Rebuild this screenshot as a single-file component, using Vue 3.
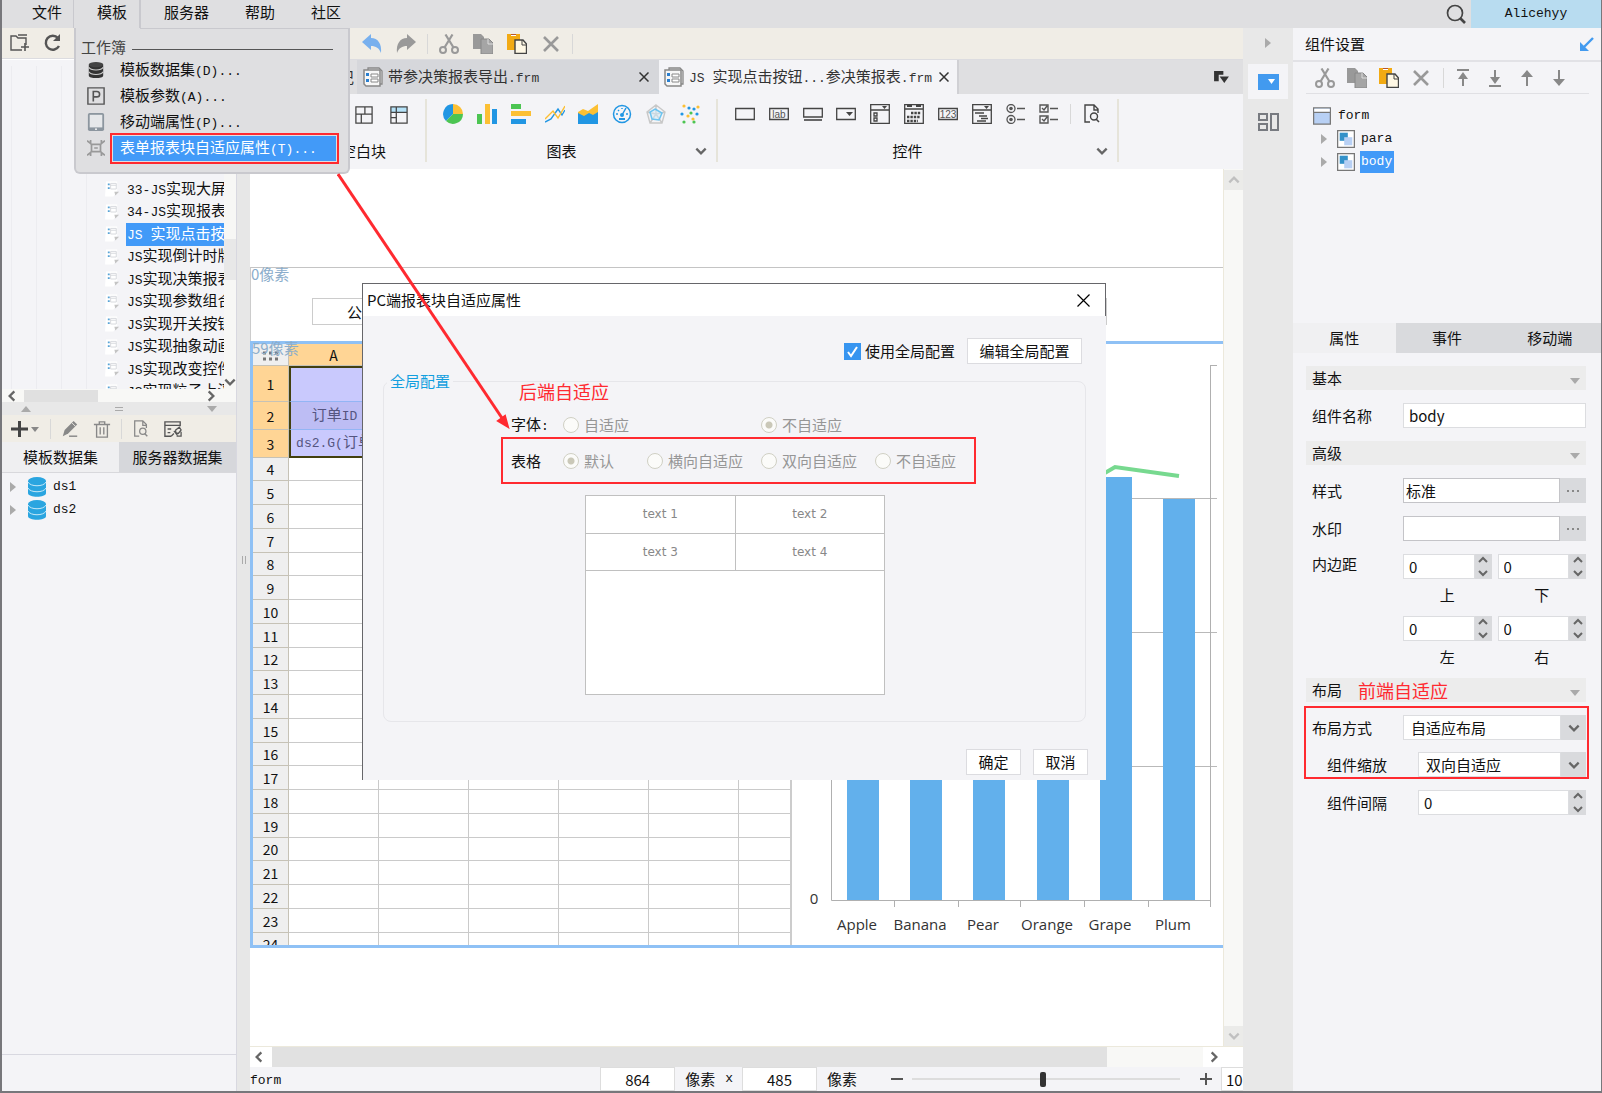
<script setup>
import { ref } from 'vue'

const menus = ['文件', '模板', '服务器', '帮助', '社区']
const menuItems = [
  { icon: 'i-db', text: '模板数据集', key: '(D)...' },
  { icon: 'i-param', text: '模板参数', key: '(A)...' },
  { icon: 'i-mobile', text: '移动端属性', key: '(P)...' },
  { icon: 'i-fit', text: '表单报表块自适应属性', key: '(T)...', active: true },
]
const files = [
  ['33-JS', '实现大屏'],
  ['34-JS', '实现报表'],
  ['JS ', '实现点击按钮'],
  ['JS', '实现倒计时牌'],
  ['JS', '实现决策报表'],
  ['JS', '实现参数组合'],
  ['JS', '实现开关按钮'],
  ['JS', '实现抽象动画'],
  ['JS', '实现改变控件'],
  ['JS', '实现粒子上浮'],
]
const chartIcons = ['i-pie', 'i-column', 'i-bar', 'i-line', 'i-area', 'i-gauge', 'i-radar', 'i-scatter']
const widgetIcons = ['i-text', 'i-label', 'i-button', 'i-combo', 'i-combocheck', 'i-date', 'i-number', 'i-tree', 'i-radios', 'i-checks']
const plainRows = Array.from({ length: 21 }, (_, i) => i + 4)
const bars = [
  { name: 'Apple', x: 55, top: 300 },
  { name: 'Banana', x: 118, top: 260 },
  { name: 'Pear', x: 181, top: 320 },
  { name: 'Orange', x: 245, top: 220 },
  { name: 'Grape', x: 308, top: 133 },
  { name: 'Plum', x: 371, top: 155 },
]
const useGlobal = ref(true)
const name = ref('body')
const style = ref('标准')
const watermark = ref('')
const gap = ref('0')
const margins = ref([
  [{ side: '上', value: '0' }, { side: '下', value: '0' }],
  [{ side: '左', value: '0' }, { side: '右', value: '0' }],
])
</script>

<template>
  <div class="app">
    <svg class="sprite" aria-hidden="true">
      <symbol id="i-folder" viewBox="0 0 20 20"><path d="M12 17H1V3h5l2 2h8v7" fill="none" stroke="#555" stroke-width="1.4" /><path d="M8 2h9M15 10v8M11 14h8" stroke="#555" stroke-width="1.6" /></symbol>
      <symbol id="i-refresh" viewBox="0 0 20 20"><path d="M16 13a7 7 0 1 1-1-8" fill="none" stroke="#555" stroke-width="2.4" /><path d="M17 1v7h-7z" fill="#555" /></symbol>
      <symbol id="i-undo" viewBox="0 0 20 20"><path d="M0 8 9 0v4c7 0 11 6 10 15-2-5-5-7-10-7v4z" fill="#78b0ee" /></symbol>
      <symbol id="i-redo" viewBox="0 0 20 20"><path d="M20 8 11 0v4C4 4 0 10 1 19c2-5 5-7 10-7v4z" fill="#999" /></symbol>
      <symbol id="i-cut" viewBox="0 0 20 20"><g fill="none" stroke="#999" stroke-width="2"><circle cx="4" cy="16" r="3" /><circle cx="16" cy="16" r="3" /><path d="m5.500 13.500 8-13M14.500 13.500l-8-13" stroke-width="2.200" /></g></symbol>
      <symbol id="i-copy" viewBox="0 0 20 20"><path d="M0 0h8l3 3v12H0z" fill="#999" /><path d="M8 5h8l4 4v11H8z" fill="#a5a5a5" stroke="#888" /><path d="M15 5v5h5" fill="none" stroke="#ddd" /></symbol>
      <symbol id="i-paste" viewBox="0 0 20 20"><path d="M0 0h13v16H0z" fill="#f2aa13" /><path d="M4 0h5v2H4z" fill="#fff" /><path d="M4 0h5v1H4z" fill="#b8552e" /><path d="M8 6h8l3.500 4v9.500H8z" fill="#fff8e5" stroke="#444" stroke-width="1.400" /><path d="M15 6v5h4" fill="none" stroke="#444" /></symbol>
      <symbol id="i-del" viewBox="0 0 20 20"><path d="m3 3 14 14M17 3 3 17" stroke="#999" stroke-width="2.600" /></symbol>
      <symbol id="i-close" viewBox="0 0 20 20"><path d="m1 1 18 18M19 1 1 19" stroke="currentColor" stroke-width="3" /></symbol>
      <symbol id="i-doc" viewBox="0 0 20 20"><path d="M5 3V1h11l3 3v13h-2" fill="#eee" stroke="#888" stroke-width="1.300" /><path d="M1 3h16v16H3l-2-2z" fill="#f7f7f7" stroke="#888" stroke-width="1.500" /><path d="M3 6h3v3H3zM3 12h3v3H3z" fill="#2a7fd0" /><path d="M8 7h7v3H8zM8 12h7v3H8z" fill="#fff" stroke="#888" /></symbol>
      <symbol id="i-file" viewBox="0 0 16 16"><path d="M1 0h12v10l-4 6H0z" fill="#fff" /><path d="M3 2h2v2H3zM3 6h2v2H3z" fill="#58a3d6" /><path d="M6 2h6v6H6zM6 4h6" fill="none" stroke="#d5d8dc" /><path d="M10 11h5l-4 4z" fill="#c4c4c4" /></symbol>
      <symbol id="i-db" viewBox="0 0 20 20"><path d="M2 4v12c0 4 16 4 16 0V4z" fill="#333" /><ellipse cx="10" cy="4" rx="8" ry="3" fill="#444" /><path d="M2 7c2 4 14 4 16 0M2 12c2 4 14 4 16 0" fill="none" stroke="#ccc" stroke-width="1.300" /></symbol>
      <symbol id="i-ds" viewBox="0 0 20 20"><path d="M1 4v12c0 5 18 5 18 0V4z" fill="#2aa5e0" /><ellipse cx="10" cy="4" rx="9" ry="4" fill="#2aa5e0" /><path d="M1 5c2 5 16 5 18 0M1 11c2 5 16 5 18 0" fill="none" stroke="#c7e9f8" /></symbol>
      <symbol id="i-param" viewBox="0 0 20 20"><path d="M1 1h18v18H1z" fill="none" stroke="#555" stroke-width="1.600" /><path d="M7 16V5h4a3 3 0 0 1 0 6H7" fill="none" stroke="#555" stroke-width="1.800" /></symbol>
      <symbol id="i-mobile" viewBox="0 0 20 20"><rect x="1" y="0" width="18" height="20" rx="2" fill="#8c969f" /><path d="M3 2h14v14H3z" fill="#e6e8ea" /><circle cx="10" cy="18" r="1" fill="#fff" /></symbol>
      <symbol id="i-fit" viewBox="0 0 20 20"><g fill="none" stroke="#999" stroke-width="1.900"><path d="M5 6h10v8H5zM8 10h4" /><path d="m0 2 4 3V1M20 2l-4 3V1M0 18l4-3v4M20 18l-4-3v4" /></g></symbol>
      <symbol id="i-block" viewBox="0 0 20 20"><path d="M1 1h18v18H1zM1 9h18M11 1v8M7 9v10" fill="none" stroke="#444" stroke-width="1.400" /></symbol>
      <symbol id="i-report" viewBox="0 0 20 20"><path d="M1 1h18v6H1z" fill="#b5e2f8" /><path d="M1 1h18v18H1zM1 7h18M7 1v18M1 13h6" fill="none" stroke="#444" stroke-width="1.400" /></symbol>
      <symbol id="i-pie" viewBox="0 0 20 20"><path d="M10 10V0A10 10 0 0 0 3 17z" fill="#2196e3" /><path d="M10 10V0a10 10 0 0 1 10 10z" fill="#fcc034" /><path d="M10 10h10A10 10 0 0 1 3 17z" fill="#4cc552" /></symbol>
      <symbol id="i-column" viewBox="0 0 20 20"><path d="M0 10h5v10H0z" fill="#4cc552" /><path d="M8 0h5v20H8z" fill="#fcc034" /><path d="M15 5h5v15h-5z" fill="#2196e3" /></symbol>
      <symbol id="i-bar" viewBox="0 0 20 20"><path d="M0 0h10v5H0z" fill="#4cc552" /><path d="M0 7h20v5H0z" fill="#fcc034" /><path d="M0 15h15v5H0z" fill="#2196e3" /></symbol>
      <symbol id="i-line" viewBox="0 0 20 20"><path d="m0 18 6-3 7-10 4 6 3-5" fill="none" stroke="#2196e3" stroke-width="1.400" /><path d="m0 15 8-8 5 7 7-12" fill="none" stroke="#fcc034" stroke-width="1.400" /></symbol>
      <symbol id="i-area" viewBox="0 0 20 20"><path d="m0 8 5-3 5 2 10-7v12H0z" fill="#fcc034" /><path d="m0 9 6 3 5-3 4 2 5-3v12H0z" fill="#2196e3" /></symbol>
      <symbol id="i-gauge" viewBox="0 0 20 20"><circle cx="10" cy="10" r="8.500" fill="none" stroke="#2196e3" stroke-width="1.500" /><path d="m10 11 4-7M4 10h2M14 10h2M10 4v1M6 6l1 1" stroke="#2196e3" stroke-width="1.500" /><circle cx="10" cy="11" r="2" fill="#2196e3" /><path d="M7 15h6" stroke="#2196e3" stroke-width="2" /></symbol>
      <symbol id="i-radar" viewBox="0 0 20 20"><path d="m10 1 9 7-3 11H4L1 8zM10 10V1M10 10l9-2M10 10l6 9M10 10l-6 9M10 10 1 8" fill="none" stroke="#c8c8c8" stroke-width="1.400" /><path d="m9 5 7 4-3 7-7-1-2-7z" fill="#cdeaf8" fill-opacity=".5" stroke="#6cc4f0" stroke-width="1.500" /></symbol>
      <symbol id="i-scatter" viewBox="0 0 20 20"><g fill="#fcc034"><circle cx="4" cy="2" r="1.600" /><circle cx="18" cy="3" r="1.600" /><circle cx="8" cy="12" r="1.600" /><circle cx="13" cy="15" r="1.600" /></g><g fill="#2196e3"><circle cx="9" cy="4" r="1.600" /><circle cx="14" cy="5" r="1.600" /><circle cx="2" cy="10" r="1.600" /><circle cx="17" cy="10" r="1.600" /></g><g fill="#4cc552"><circle cx="11" cy="9" r="1.600" /><circle cx="4" cy="18" r="1.600" /><circle cx="14" cy="18" r="1.600" /></g></symbol>
      <symbol id="i-text" viewBox="0 0 20 20"><path d="M.7 4.500h18.600v11H.7z" fill="none" stroke="#444" stroke-width="1.300" /></symbol>
      <symbol id="i-label" viewBox="0 0 20 20"><path d="M.7 4.500h18.600v11H.7z" fill="none" stroke="#444" stroke-width="1.300" /><text x="10" y="14" text-anchor="middle" font-size="10" font-family="Liberation Sans, sans-serif" fill="#555">lab</text></symbol>
      <symbol id="i-button" viewBox="0 0 20 20"><path d="M.7 4.500h18.600v8.500H.7z" fill="none" stroke="#444" stroke-width="1.300" /><path d="M1 16h18" stroke="#444" stroke-width="1.600" /></symbol>
      <symbol id="i-combo" viewBox="0 0 20 20"><path d="M.7 4.500h18.600v11H.7z" fill="none" stroke="#444" stroke-width="1.300" /><path d="M10 8h7l-3.500 4z" fill="#444" /></symbol>
      <symbol id="i-combocheck" viewBox="0 0 20 20"><path d="M.7.7h18.600v18.600H.7zM1 6h18M4 9h3v3H4zM4 14h3v3H4z" fill="none" stroke="#444" stroke-width="1.300" /><path d="M12 2h5l-2.500 3z" fill="#444" /></symbol>
      <symbol id="i-date" viewBox="0 0 20 20"><path d="M.7.7h18.600v18.600H.7zM1 5h18" fill="none" stroke="#444" stroke-width="1.300" /><path d="M3 2h5M12 2h5" stroke="#444" stroke-width="2" /><path d="M7 9h10M3 13h13M3 17h11" stroke="#444" stroke-width="2.400" stroke-dasharray="2.400 1" /></symbol>
      <symbol id="i-number" viewBox="0 0 20 20"><path d="M.7 4.500h18.600v11H.7z" fill="none" stroke="#444" stroke-width="1.300" /><text x="10" y="14" text-anchor="middle" font-size="10" font-family="Liberation Sans, sans-serif" fill="#555">123</text></symbol>
      <symbol id="i-tree" viewBox="0 0 20 20"><path d="M.7.7h18.600v18.600H.7zM1 6h18M3 9h9M7 12h8M9 14.500h7M5 17h9" fill="none" stroke="#444" stroke-width="1.300" /><path d="M12 2h5l-2.500 3z" fill="#444" /></symbol>
      <symbol id="i-radios" viewBox="0 0 20 20"><g fill="none" stroke="#555" stroke-width="1.300"><circle cx="5" cy="4.500" r="4" /><circle cx="5" cy="15.500" r="4" /><path d="M11 4.500h8M11 15.500h8" stroke-width="1.600" /></g><circle cx="5" cy="4.500" r="1.800" fill="#555" /><circle cx="5" cy="15.500" r="1.800" fill="#555" /></symbol>
      <symbol id="i-checks" viewBox="0 0 20 20"><path d="M1 1h8v7H1zM1 12h8v7H1zM11 4.500h8M11 15.500h8M3 4l2 2 3-4M3 15l2 2 3-4" fill="none" stroke="#555" stroke-width="1.400" /></symbol>
      <symbol id="i-preview" viewBox="0 0 20 20"><path d="M8 18H3V1h9l4 4v4M12 1v5h4" fill="none" stroke="currentColor" stroke-width="1.400" /><circle cx="12" cy="12.500" r="3.500" fill="none" stroke="currentColor" stroke-width="1.400" /><path d="m14 15 3 3" stroke="currentColor" stroke-width="1.600" /></symbol>
      <symbol id="i-pencil" viewBox="0 0 20 20"><path d="m2 18 2-7L14 1l4 4L8 15z" fill="#888" /><path d="m12 3 4 4" stroke="#f0ede6" /><path d="M9 18h9" stroke="#888" stroke-width="1.600" /></symbol>
      <symbol id="i-trash" viewBox="0 0 20 20"><path d="M1 5h18M7 5V2h6v3M4 5v14h12V5M8 8v8M12 8v8" fill="none" stroke="#888" stroke-width="1.500" /></symbol>
      <symbol id="i-dsedit" viewBox="0 0 20 20"><path d="M8 18H1V2h17v5M1 6h17M4 10h4M4 14h3" fill="none" stroke="#555" stroke-width="1.500" /><path d="m8 18 3-3m0-3 4 5m-2-6 4-3 2 3-3 4-3-1zM14 18h5v-5" fill="none" stroke="#555" stroke-width="1.400" /></symbol>
      <symbol id="i-search" viewBox="0 0 20 20"><circle cx="9" cy="9" r="7.500" fill="none" stroke="#444" stroke-width="1.700" /><path d="m14 14 5 5" stroke="#444" stroke-width="2.600" /></symbol>
      <symbol id="i-top" viewBox="0 0 20 20"><path d="M4 2h12M10 18V8" stroke="#888" stroke-width="2" /><path d="M5 11h10l-5-7z" fill="#888" /></symbol>
      <symbol id="i-bottom" viewBox="0 0 20 20"><path d="M4 18h12M10 2v10" stroke="#888" stroke-width="2" /><path d="M5 9h10l-5 7z" fill="#888" /></symbol>
      <symbol id="i-up" viewBox="0 0 20 20"><path d="M10 18V6" stroke="#888" stroke-width="2" /><path d="M4 9h12l-6-7z" fill="#888" /></symbol>
      <symbol id="i-down" viewBox="0 0 20 20"><path d="M10 2v12" stroke="#888" stroke-width="2" /><path d="M4 11h12l-6 7z" fill="#888" /></symbol>
      <symbol id="i-form" viewBox="0 0 20 20"><path d="M.7 1h18.600v18H.7z" fill="#b8d0f4" stroke="#777" stroke-width="1.400" /><path d="M1.400 2h17.200v3.500H1.400z" fill="#fff" /><path d="M1 6h18" stroke="#777" stroke-width="1.400" /></symbol>
      <symbol id="i-part" viewBox="0 0 20 20"><path d="M.7.7h18.600v18.600H.7z" fill="#fff" stroke="#777" stroke-width="1.400" /><path d="M3 3h9v9H3z" fill="#3391c9" /><path d="M8 8h9v9H8z" fill="#b8d0f4" /></symbol>
      <symbol id="i-chev" viewBox="0 0 12 12"><path d="m2 4 4 4 4-4" fill="none" stroke="currentColor" stroke-width="2" /></symbol>
      <symbol id="i-tri" viewBox="0 0 10 10"><path d="M0 2h10L5 8z" fill="currentColor" /></symbol>
    </svg>

    <header class="menubar">
      <nav class="menus">
        <button v-for="m in menus" :key="m" class="menu" :class="{ open: m === '模板' }">{{ m }}</button>
      </nav>
      <button class="plain" aria-label="搜索"><svg class="ic"><use href="#i-search" /></svg></button>
      <button class="user mono">Alicehyy</button>
    </header>

    <div class="main">
      <aside class="left">
        <div class="bar">
          <button class="plain" aria-label="新建文件夹"><svg class="ic"><use href="#i-folder" /></svg></button>
          <button class="plain" aria-label="刷新"><svg class="ic"><use href="#i-refresh" /></svg></button>
        </div>
        <div class="tree">
          <ul class="files">
            <li v-for="(f, i) in files" :key="i">
              <svg class="fic"><use href="#i-file" /></svg>
              <span class="fname" :class="{ sel: i === 2 }"><span class="mono pre">{{ f[0] }}</span>{{ f[1] }}</span>
            </li>
          </ul>
          <div class="tree-v"><i></i><svg class="ch"><use href="#i-chev" /></svg></div>
          <div class="tree-h"><svg class="ch l"><use href="#i-chev" /></svg><i></i><b></b><svg class="ch r"><use href="#i-chev" /></svg></div>
        </div>
        <div class="split-h"><svg class="tri flip"><use href="#i-tri" /></svg><span class="grip"></span><svg class="tri"><use href="#i-tri" /></svg></div>
        <div class="ds-bar">
          <button class="plain add" aria-label="添加"><svg width="28" height="18" viewBox="0 0 28 18"><path d="M8.500 1v16M0 9h17" stroke="#444" stroke-width="3" /><path d="M20 7h8l-4 5z" fill="#888" /></svg></button>
          <span class="vs"></span>
          <button class="plain" aria-label="编辑"><svg class="ic s"><use href="#i-pencil" /></svg></button>
          <button class="plain" aria-label="删除"><svg class="ic s"><use href="#i-trash" /></svg></button>
          <span class="vs"></span>
          <button class="plain grey" aria-label="预览"><svg class="ic s"><use href="#i-preview" /></svg></button>
          <button class="plain" aria-label="连接"><svg class="ic s"><use href="#i-dsedit" /></svg></button>
        </div>
        <div class="ds-tabs"><button class="on">模板数据集</button><button>服务器数据集</button></div>
        <ul class="ds-list">
          <li v-for="d in ['ds1', 'ds2']" :key="d"><svg class="tri side"><use href="#i-tri" /></svg><svg class="ic"><use href="#i-ds" /></svg><span class="mono">{{ d }}</span></li>
        </ul>
        <div class="left-foot"></div>
      </aside>
      <div class="split-v"><span></span></div>

      <section class="center">
        <div class="toolbar">
          <button class="plain" aria-label="撤销"><svg class="ic"><use href="#i-undo" /></svg></button>
          <button class="plain" aria-label="重做"><svg class="ic"><use href="#i-redo" /></svg></button>
          <span class="vs"></span>
          <button class="plain" aria-label="剪切"><svg class="ic"><use href="#i-cut" /></svg></button>
          <button class="plain" aria-label="复制"><svg class="ic"><use href="#i-copy" /></svg></button>
          <button class="plain" aria-label="粘贴"><svg class="ic"><use href="#i-paste" /></svg></button>
          <button class="plain" aria-label="删除"><svg class="ic"><use href="#i-del" /></svg></button>
          <span class="vs"></span>
        </div>
        <div class="tabs">
          <div class="tab first">记</div>
          <div class="tab"><svg class="ic"><use href="#i-doc" /></svg><span class="tt">带参决策报表导出<span class="mono">.frm</span></span><svg class="x"><use href="#i-close" /></svg></div>
          <div class="tab on"><svg class="ic"><use href="#i-doc" /></svg><span class="tt"><span class="mono pre">JS </span>实现点击按钮<span class="mono">...</span>参决策报表<span class="mono">.frm</span></span><svg class="x"><use href="#i-close" /></svg></div>
          <button class="plain more" aria-label="标签列表"><svg width="15" height="13" viewBox="0 0 16 14"><path d="M0 0h10v4H5v7H0z" fill="#333" /><path d="M6 6h10l-5 7z" fill="#333" /></svg></button>
        </div>
        <div class="ribbon">
          <div class="group blank">
            <div class="icons"><svg class="ic s"><use href="#i-block" /></svg><svg class="ic s"><use href="#i-report" /></svg></div>
            <div class="glabel">空白块</div>
          </div>
          <div class="group charts">
            <div class="icons"><svg v-for="c in chartIcons" :key="c" class="ic"><use :href="'#' + c" /></svg></div>
            <div class="glabel">图表</div><svg class="ch gmore"><use href="#i-chev" /></svg>
          </div>
          <div class="group widgets">
            <div class="icons"><svg v-for="c in widgetIcons" :key="c" class="ic"><use :href="'#' + c" /></svg><span class="vs"></span><svg class="ic dark"><use href="#i-preview" /></svg></div>
            <div class="glabel">控件</div><svg class="ch gmore"><use href="#i-chev" /></svg>
          </div>
        </div>

        <div class="work">
          <div class="canvas">
            <div class="para"><span class="px">0像素</span><div class="company">公</div></div>
            <div class="body">
              <span class="px over">59像素</span>
              <div class="sheet-wrap">
                <table class="sheet">
                  <colgroup><col class="num"><col v-for="n in 6" :key="n"></colgroup>
                  <thead><tr><th><svg width="18" height="10" viewBox="0 0 18 10"><path d="M1 2h16M1 8h16" stroke="#777" stroke-width="3" stroke-dasharray="3 3" /></svg></th><th v-for="c in 'ABCDEF'" :key="c" class="hot">{{ c }}</th></tr></thead>
                  <tbody>
                    <tr class="r1"><th class="hot">1</th><td class="s1"></td><td v-for="n in 5" :key="n"></td></tr>
                    <tr class="r2"><th class="hot">2</th><td class="s2">订单<span class="mono">ID</span></td><td v-for="n in 5" :key="n"></td></tr>
                    <tr class="r2"><th class="hot">3</th><td class="s3"><div><span class="mono">ds2.G(</span>订单<br><span class="mono">ID)</span></div></td><td v-for="n in 5" :key="n"></td></tr>
                    <tr v-for="r in plainRows" :key="r" class="rn"><th>{{ r }}</th><td v-for="n in 6" :key="n"></td></tr>
                  </tbody>
                </table>
              </div>
              <svg class="chart" width="431" height="601" viewBox="0 0 431 601">
                <g stroke="#b9b9b9" stroke-width="1" fill="none"><path d="M40 154.500h385M40 288.500h385M40 422.500h385" /></g>
                <rect v-for="b in bars" :key="b.name" :x="b.x" :y="b.top" width="32" :height="556 - b.top" fill="#62b0ec" />
                <path d="M39.500 21v535.500h379V21M418 21.500h7M102.500 556v7M166.500 556v7M228.500 556v7M292.500 556v7M356.500 556v7M418.500 556v7" fill="none" stroke="#b0b0b0" />
                <path d="m260 160 63-37 64 9" fill="none" stroke="#77d98f" stroke-width="4" />
                <g font-size="15" fill="#333" text-anchor="middle"><text x="22" y="560">0</text><text v-for="b in bars" :key="b.name" :x="b.x + 10" y="586">{{ b.name }}</text></g>
              </svg>
            </div>
          </div>
          <div class="vbar"><span><svg class="ch flip"><use href="#i-chev" /></svg></span><span><svg class="ch"><use href="#i-chev" /></svg></span></div>
          <div class="hbar"><span><svg class="ch l"><use href="#i-chev" /></svg></span><i></i><b></b><span><svg class="ch r"><use href="#i-chev" /></svg></span></div>
        </div>
        <footer class="status">
          <span class="mono fname-status">form</span>
          <input class="w1" aria-label="宽度" value="864"><span class="unit">像素</span><span class="mono by">x</span>
          <input class="w1" aria-label="高度" value="485"><span class="unit">像素</span>
          <button class="plain zoom" aria-label="缩小"><svg width="14" height="14" viewBox="0 0 14 14"><path d="M1 7h12" stroke="#555" stroke-width="2" /></svg></button>
          <input class="slider" type="range" aria-label="缩放" min="0" max="100" value="49">
          <button class="plain zoom" aria-label="放大"><svg width="14" height="14" viewBox="0 0 14 14"><path d="M1 7h12M7 1v12" stroke="#555" stroke-width="2" /></svg></button>
          <input class="pct" aria-label="比例" value="100">
        </footer>
      </section>

      <div class="rail">
        <svg class="tri side"><use href="#i-tri" /></svg>
        <button class="plain on" aria-label="组件设置"><svg width="21" height="16" viewBox="0 0 21 16"><path d="M0 0h21v16H0z" fill="#429aef" /><path d="M10 5h7l-3.500 5z" fill="#fff" /></svg></button>
        <button class="plain" aria-label="组件库"><svg width="21" height="18" viewBox="0 0 21 18"><path d="M1 1h8v6H1zM1 11h8v6H1zM13 1h7v16h-7z" fill="none" stroke="#777a80" stroke-width="2" /></svg></button>
      </div>

      <aside class="props">
        <div class="ptitle">组件设置<svg width="14" height="14" viewBox="0 0 14 14"><path d="m13 1-9 9" stroke="#429aef" stroke-width="2.400" /><path d="M0 5v9h9z" fill="#429aef" /></svg></div>
        <div class="ptools">
          <svg class="ic"><use href="#i-cut" /></svg><svg class="ic"><use href="#i-copy" /></svg><svg class="ic"><use href="#i-paste" /></svg><svg class="ic"><use href="#i-del" /></svg>
          <span class="vs"></span>
          <svg class="ic"><use href="#i-top" /></svg><svg class="ic"><use href="#i-bottom" /></svg><svg class="ic"><use href="#i-up" /></svg><svg class="ic"><use href="#i-down" /></svg>
        </div>
        <ul class="ptree">
          <li class="root"><svg class="ic s"><use href="#i-form" /></svg><span class="mono">form</span></li>
          <li><svg class="tri side"><use href="#i-tri" /></svg><svg class="ic s"><use href="#i-part" /></svg><span class="mono">para</span></li>
          <li><svg class="tri side"><use href="#i-tri" /></svg><svg class="ic s"><use href="#i-part" /></svg><span class="mono sel">body</span></li>
        </ul>
        <div class="ptabs"><button class="on">属性</button><button>事件</button><button>移动端</button></div>
        <div class="form">
          <div class="sec">基本<svg class="tri"><use href="#i-tri" /></svg></div>
          <div class="row"><label for="p-name">组件名称</label><input id="p-name" v-model="name" class="grow"></div>
          <div class="sec">高级<svg class="tri"><use href="#i-tri" /></svg></div>
          <div class="row"><label for="p-style">样式</label><input id="p-style" v-model="style" class="grow dk"><button class="dots" aria-label="选择样式"><i></i><i></i><i></i></button></div>
          <div class="row"><label for="p-wm">水印</label><input id="p-wm" v-model="watermark" class="grow dk"><button class="dots" aria-label="选择水印"><i></i><i></i><i></i></button></div>
          <div v-for="(pair, i) in margins" :key="i" class="row pad">
            <span class="lab">{{ i === 0 ? '内边距' : '' }}</span>
            <div class="pair">
              <div v-for="m in pair" :key="m.side" class="side-field">
                <div class="spin"><input :id="'m-' + m.side" v-model="m.value"><span class="sb"><button aria-label="增加"><svg class="ch flip"><use href="#i-chev" /></svg></button><button aria-label="减少"><svg class="ch"><use href="#i-chev" /></svg></button></span></div>
                <label :for="'m-' + m.side">{{ m.side }}</label>
              </div>
            </div>
          </div>
          <div class="sec">布局<span class="note">前端自适应</span><svg class="tri"><use href="#i-tri" /></svg></div>
          <div class="layout-rows">
            <div class="row"><label for="p-layout">布局方式</label><div class="select grow"><select id="p-layout"><option>自适应布局</option></select><svg class="ch"><use href="#i-chev" /></svg></div></div>
            <div class="row sub"><label for="p-scale">组件缩放</label><div class="select grow"><select id="p-scale"><option>双向自适应</option></select><svg class="ch"><use href="#i-chev" /></svg></div></div>
            <div class="redbox"></div>
          </div>
          <div class="row sub"><label for="p-gap">组件间隔</label><div class="spin grow"><input id="p-gap" v-model="gap"><span class="sb"><button aria-label="增加"><svg class="ch flip"><use href="#i-chev" /></svg></button><button aria-label="减少"><svg class="ch"><use href="#i-chev" /></svg></button></span></div></div>
        </div>
      </aside>
    </div>

    <div class="popup">
      <div class="ph">工作簿<span></span></div>
      <button v-for="m in menuItems" :key="m.key" class="pi" :class="{ active: m.active }">
        <svg class="ic s"><use :href="'#' + m.icon" /></svg><span class="pt">{{ m.text }}<span class="mono">{{ m.key }}</span></span>
      </button>
    </div>

    <div class="dialog" role="dialog" aria-label="PC端报表块自适应属性">
      <div class="dtitle">PC端报表块自适应属性<button class="plain" aria-label="关闭"><svg width="13" height="13" viewBox="0 0 13 13"><path d="m.5.5 12 12M12.500.5l-12 12" stroke="#000" stroke-width="1.200" /></svg></button></div>
      <div class="dbody">
        <div class="dtop">
          <label class="chk"><input v-model="useGlobal" type="checkbox">使用全局配置</label>
          <button class="btn wide">编辑全局配置</button>
        </div>
        <fieldset>
          <legend>全局配置</legend>
          <div class="note hint">后端自适应</div>
          <div class="opts">
            <span class="ol">字体<span class="mono">:</span></span>
            <label><input type="radio" name="font" disabled>自适应</label>
            <label class="c3"><input type="radio" name="font" checked disabled>不自适应</label>
          </div>
          <div class="opts boxed">
            <span class="ol">表格</span>
            <label><input type="radio" name="grid" checked disabled>默认</label>
            <label><input type="radio" name="grid" disabled>横向自适应</label>
            <label class="c3"><input type="radio" name="grid" disabled>双向自适应</label>
            <label><input type="radio" name="grid" disabled>不自适应</label>
          </div>
          <div class="sample"><table><tbody><tr><td>text 1</td><td>text 2</td></tr><tr><td>text 3</td><td>text 4</td></tr></tbody></table></div>
        </fieldset>
        <div class="dfoot"><button class="btn">确定</button><button class="btn">取消</button></div>
      </div>
    </div>
    <svg class="arrow" width="174" height="256" viewBox="0 0 174 256"><path d="m1 1 166 247" stroke="#ff2a30" stroke-width="3" /><path d="m171 254-10-6 7-5z" fill="#ff2a30" stroke="#ff2a30" stroke-width="2" /></svg>
  </div>
</template>

<style>
body { background: #f4f4f7; overflow: hidden; }
</style>
<style scoped>
* { box-sizing: border-box; }
.app { position: relative; height: 100vh; min-height: 900px; display: flex; flex-direction: column; overflow: hidden; background: #f4f4f7; border: solid #77777b; border-width: 0 1px 2px 2px; color: #111; font: 15px/20px "Noto Sans CJK SC", sans-serif; }
.sprite { position: absolute; width: 0; height: 0; }
button, input, select { font: inherit; color: inherit; border: 0; padding: 0; margin: 0; background: none; border-radius: 0; outline: 0; }
ul { list-style: none; margin: 0; padding: 0; }
svg { flex: none; }
.ic { width: 20px; height: 20px; display: block; }
.ic.s { width: 18px; height: 18px; }
.ch { width: 14px; height: 14px; color: #666; display: block; }
.tri { width: 10px; height: 10px; color: #aaa; display: block; }
.flip { transform: rotate(180deg); }
.side { transform: rotate(-90deg); }
.l { transform: rotate(90deg); }
.r { transform: rotate(-90deg); }
.plain { display: flex; align-items: center; justify-content: center; }
.mono { font-family: "Liberation Mono", monospace; font-size: 13px; }
.pre { white-space: pre; }
.vs { width: 1px; height: 20px; background: #d8d8d8; }
.note { color: #ff2a30; font-size: 18px; }

.menubar { height: 28px; flex: none; display: flex; align-items: center; background: #dfdfe1; }
.menus { flex: 1; display: flex; align-self: stretch; padding-left: 12px; }
.menu { padding: 0 18px 4px; }
.menu.open { border: solid #c9c9ce; border-width: 0 2px 0 1px; padding: 0 12px 4px 23px; margin: 0 5px 0 -7px; }
.user { width: 130px; height: 28px; margin-left: 5px; background: #b8dcf0; }

.main { flex: 1; min-height: 0; display: flex; }
.left { width: 235px; flex: none; display: flex; flex-direction: column; border-right: 1px solid #d8d8e0; }
.bar { height: 31px; flex: none; display: flex; align-items: center; gap: 13px; padding-left: 8px; background: #f0ede6; border-bottom: 1px solid #dcdce0; }
.tree { height: 343px; flex: none; display: grid; grid-template: 1fr 14px / 1fr 12px; border-top: 1px solid #fff; overflow: hidden; }
.files { display: flex; flex-direction: column; height: 343px; padding-top: 118px; overflow: hidden; margin-bottom: -14px; background: repeating-linear-gradient(90deg, transparent 0 9px, #ececf0 9px 10px, transparent 10px 25px) 0 6px / 100px 100% no-repeat; }
.files li { flex: 1; display: flex; align-items: center; gap: 6px; padding-left: 103px; white-space: nowrap; overflow: hidden; }
.fic { width: 15px; height: 16px; }
.fname { flex: 1; padding-left: 1px; overflow: hidden; line-height: 22px; }
.sel { background: #429af8; color: #fff; }
.tree-v { background: #f7f7f5; display: flex; flex-direction: column; justify-content: space-between; align-items: center; padding-top: 179px; overflow: hidden; }
.tree-v i { width: 12px; height: 41px; background: #e8e8e8; }
.tree-h { grid-column: 1 / 3; display: flex; align-items: center; background: #f8f8f6; position: relative; padding: 0 18px 0 3px; }
.tree-h i { width: 74px; height: 12px; background: #e0e0e0; margin-left: 5px; }
.tree-h b { flex: 1; }
.split-h { height: 13px; flex: none; display: flex; align-items: center; justify-content: space-between; padding: 0 19px; background: #e8e8e8; }
.grip { width: 8px; height: 4px; border: solid #aaa; border-width: 1px 0; }
.ds-bar { height: 27px; flex: none; display: flex; align-items: center; gap: 10px; padding-left: 9px; background: #f0ede6; }
.ds-bar .add { margin-right: 1px; }
.ds-bar .plain + .plain { margin-left: 4px; }
.grey { color: #888; }
.ds-tabs { height: 31px; flex: none; display: flex; border-bottom: 1px solid #d8d8dc; }
.ds-tabs button { flex: 1; background: #d6d7db; }
.ds-tabs .on { background: #efeff1; }
.ds-list { flex: 1; padding-top: 2px; }
.ds-list li { height: 23px; display: flex; align-items: center; padding-left: 6px; }
.ds-list .ic { margin: 0 6px 0 9px; }
.left-foot { height: 37px; flex: none; border-top: 1px solid #d8d8e0; }
.split-v { width: 13px; flex: none; display: flex; align-items: center; justify-content: center; background: #e7e7e7; }
.split-v span { width: 4px; height: 8px; border: solid #aaa; border-width: 0 1px; }

.center { flex: 1; min-width: 0; display: flex; flex-direction: column; }
.toolbar { height: 32px; flex: none; display: flex; align-items: center; gap: 14px; padding-left: 112px; background: #f0ede6; border-bottom: 1px solid #dcdce0; }
.toolbar .vs { margin: 0 -3px; }
.tabs { height: 34px; flex: none; display: flex; background: #dfdfe1; color: #333; }
.tab { display: flex; align-items: center; gap: 5px; height: 34px; white-space: nowrap; padding: 0 10px 0 6px; background: #d6d7db; width: 302px; }
.tab.first { width: 107px; justify-content: flex-end; padding-right: 3px; background: #dfdfe1; }
.tab.on { background: #f4f4f7; border-right: 2px solid #d0d0d4; width: 300px; padding: 0 8px 0 5px; }
.tt { flex: 1; }
.x { width: 10px; height: 10px; }
.more { margin: 0 14px 0 auto; }
.ribbon { height: 75px; flex: none; display: flex; padding: 5px 0 7px; }
.group { position: relative; display: flex; flex-direction: column; border-right: 2px solid #e6e4da; }
.icons { height: 30px; display: flex; align-items: center; justify-content: space-between; }
.glabel { text-align: center; margin-top: 12px; padding-right: 20px; }
.gmore { position: absolute; right: 8px; bottom: 4px; }
.blank { width: 177px; padding-left: 91px; }
.blank .icons { padding: 2px 17px 0 14px; }
.blank .glabel { text-align: left; padding: 0; }
.charts { width: 291px; }
.charts .icons { padding: 0 16px 0 16px; }
.widgets { width: 401px; }
.widgets .icons { padding: 0 15px 0 17px; }
.widgets .vs { margin: 0 -3px; }
.dark { color: #444; }

.work { flex: 1; min-height: 0; display: grid; grid-template: minmax(0, 1fr) 21px / minmax(0, 1fr) 20px; }
.canvas { background: #fff; padding-top: 98px; overflow: hidden; }
.para { height: 74px; border-top: 1px solid #c4c4c4; border-left: 1px solid #ccc; }
.px { color: #8badcb; font-size: 15px; line-height: 12px; display: block; }
.px.over { position: absolute; left: -1px; top: -3px; z-index: 1; line-height: 14px; }
.company { width: 795px; height: 27px; margin: 18px 0 0 61px; border: 1px solid #ccc; padding: 3px 0 0 34px; }
.body { position: relative; display: flex; height: 607px; border: solid #8fc1f5; border-width: 3px 0 3px 3px; }
.sheet-wrap { width: 539px; flex: none; overflow: hidden; border-right: 2px solid #ccc; }
.sheet { width: 576px; table-layout: fixed; border-collapse: separate; border-spacing: 0; }
.sheet .num { width: 36px; }
.sheet th, .sheet td { padding: 0; border: solid #cacaca; border-width: 0 1px 1px 0; font-weight: 400; text-align: center; font-size: 14px; line-height: 16px; overflow: hidden; white-space: nowrap; }
.sheet th { background: #efefef; font-family: "Noto Sans CJK SC", sans-serif; border-color: #c6c2b6; }
.sheet th.hot { background: #ffd595; }
.sheet thead th { height: 22px; }
.sheet .r1 > * { height: 36px; }
.sheet .r2 > * { height: 28px; }
.sheet .rn > * { height: 24px; }
.sheet .rn:nth-child(4n) > * { height: 23px; }
.sheet .s1, .sheet .s2, .sheet .s3 { background: #c9c9fd; color: #555580; border-left: 2px solid #43400f; font-size: 15px; }
.sheet .s1 { border-top: 2px solid #43400f; border-bottom-color: #93b5f5; }
.sheet .s2 { background: #bdbdf4; border-bottom-color: #93b5f5; }
.sheet .s3 { border-bottom: 2px solid #43400f; }
.s3 div { height: 25px; line-height: 20px; }
.chart { font-family: "Open Sans", sans-serif; }
.vbar { background: #f8f8f6; border-left: 1px solid #ece9dc; display: flex; flex-direction: column; justify-content: space-between; padding-top: 1px; }
.vbar span { height: 20px; display: grid; place-items: center; background: #ebebe9; }
.vbar .ch { color: #c0c0c0; }
.hbar { grid-column: 1 / 3; display: flex; background: #fff; border-top: 1px solid #ece9dc; }
.hbar span { width: 22px; display: grid; place-items: center; }
.hbar span:first-child { padding-right: 5px; }
.hbar span:last-child { margin-right: 18px; }
.hbar i { flex: 835; background: #e1e1e1; }
.hbar b { flex: 96; background: #f8f8f6; }
.status { height: 24px; flex: none; display: flex; align-items: center; overflow: hidden; }
.fname-status { flex: 1; padding-top: 3px; }
.status input { background: #fff; }
.w1 { width: 75px; height: 24px; text-align: center; border: 1px solid #ddd; }
.unit { margin: 0 10px; }
.by { margin-right: 9px; }
.zoom { width: 14px; margin: 0 0 0 23px; }
.status .slider { appearance: none; width: 268px; height: 16px; margin: 0 -4px 0 8px; background: linear-gradient(#ddd, #ddd) center / 100% 2px no-repeat; }
.slider::-webkit-slider-thumb { appearance: none; width: 6px; height: 15px; border-radius: 2px; background: #333; }
.status .pct { width: 22px; height: 24px; margin-left: 8px; padding-left: 4px; border: 1px solid #ddd; border-right: 0; }

.rail { width: 50px; flex: none; display: flex; flex-direction: column; align-items: center; background: #e8e8e8; padding-top: 10px; }
.rail .plain { width: 40px; height: 35px; margin-bottom: 5px; }
.rail .on { background: #f4f4f7; margin-top: 16px; }

.props { width: 308px; flex: none; }
.ptitle { height: 34px; display: flex; align-items: center; justify-content: space-between; padding: 0 7px 0 12px; border-bottom: 2px solid #e2e2e6; }
.ptools { height: 32px; margin: 0 12px 0 13px; padding-left: 9px; display: flex; align-items: center; gap: 12px; border-bottom: 1px solid #e0e0e4; }
.ptools .vs { margin-right: -3px; }
.ptree { height: 229px; padding: 10px 0 0 24px; }
.ptree li { height: 23px; display: flex; align-items: center; }
.ptree .ic { margin: 0 5px 0 8px; }
.ptree .tri { margin-left: 2px; }
.ptree .root .ic { margin: 0 6px 0 -4px; }
.ptree span { height: 22px; line-height: 22px; padding: 0 2px 0 1px; }
.ptabs { height: 30px; display: flex; }
.ptabs button { flex: 1; background: #d9dadd; }
.ptabs .on { background: #f0f0f2; }
.form { padding: 13px 15px 0 13px; display: flex; flex-direction: column; gap: 13px; }
.sec { height: 24px; display: flex; align-items: center; padding: 0 6px; background: #ececec; }
.sec .tri { margin: 6px 0 0 auto; }
.sec .note { margin-left: 16px; }
.row { display: flex; align-items: center; height: 25px; padding-left: 6px; }
.row > label, .row > .lab { width: 91px; flex: none; }
.row.sub { padding-left: 21px; }
.grow { flex: 1; min-width: 0; }
.form input, .form select { background: #fff; height: 25px; border: 1px solid #dcdde0; padding-left: 5px; }
.form input.dk { border-color: #c4c4c8; padding-left: 2px; }
.dots { width: 26px; height: 25px; flex: none; display: flex; align-items: center; justify-content: center; gap: 3px; background: #d9dadd; }
.dots i { width: 2px; height: 2px; background: #888; }
.row.pad { height: 49px; align-items: flex-start; }
.pair { flex: 1; min-width: 0; display: flex; gap: 6px; }
.side-field { flex: 1; min-width: 0; display: flex; flex-direction: column; align-items: center; gap: 6px; }
.spin { display: flex; width: 100%; }
.spin input { flex: 1; width: 20px; min-width: 0; }
.sb { width: 17px; flex: none; background: #d9dadd; display: flex; flex-direction: column; justify-content: space-around; align-items: center; }
.sb .ch { height: 12px; }
.sb button { height: 12px; }
.layout-rows { position: relative; display: flex; flex-direction: column; gap: 12px; }
.redbox { position: absolute; inset: -9px -3px -2px -2px; border: 2px solid #ff2a30; pointer-events: none; }
.select { display: flex; position: relative; background: #d9dadd; align-items: center; }
.select select { flex: 1; min-width: 0; appearance: none; padding-left: 7px; }
.select .ch { margin: 0 5px 0 6px; }

.popup { position: absolute; left: 72px; top: 28px; width: 276px; height: 146px; padding: 9px 10px 0 5px; background: #dfdfe1; border: solid #c9c9ce; border-width: 0 2px 2px; border-radius: 0 0 6px 6px; z-index: 2; }
.popup::before { content: ""; position: absolute; left: 64px; right: -2px; top: 0; border-top: 1px solid #c9c9ce; }
.ph { display: flex; align-items: center; gap: 6px; color: #444; line-height: 20px; }
.ph span { flex: 1; height: 1px; background: #555; margin: 4px 5px 0 0; }
.pi { width: 100%; height: 26px; display: flex; align-items: center; gap: 8px; padding-left: 6px; text-align: left; white-space: nowrap; }
.pt { flex: 1; padding-left: 7px; line-height: 22px; }
.active .pt { background: #429af8; color: #fff; outline: 2px solid #ff2a30; outline-offset: 1px; margin-right: 2px; }

.dialog { position: absolute; left: 360px; top: 283px; width: 744px; z-index: 3; background: #f4f4f7; border: solid #66666a; border-width: 1px 0 0 1px; }
.dtitle { height: 32px; display: flex; align-items: center; justify-content: space-between; padding: 0 15px 0 4px; background: #fff; border-right: 1px solid #66666a; }
.dbody { padding: 22px 20px 5px; }
.dtop { display: flex; justify-content: flex-end; align-items: center; gap: 12px; padding-right: 4px; }
.chk { display: flex; align-items: center; gap: 4px; }
.chk input { appearance: none; width: 17px; height: 17px; background: #fff; border: 1px solid #aaa; }
.chk input:checked { border: 0; background: #3795f0 url("data:image/svg+xml,%3Csvg xmlns='http://www.w3.org/2000/svg' viewBox='0 0 17 17'%3E%3Cpath d='m4 9 3 4 6-9' fill='none' stroke='white' stroke-width='2'/%3E%3C/svg%3E"); }
.btn { width: 55px; height: 26px; background: #fff; border: 1px solid #dcdce0; line-height: 22px; }
.btn.wide { width: 115px; }
fieldset { position: relative; margin: 7px 0 0; padding: 0 0 26px; border: 1px solid #e6e6ea; border-radius: 8px; min-width: 0; }
legend { margin-left: 3px; padding: 0 3px; color: #129fdf; line-height: 20px; }
.hint { margin: -10px 0 0 135px; line-height: 20px; }
.opts { display: grid; grid-template-columns: 52px 84px 114px 114px 1fr; align-items: center; height: 47px; margin: 0 109px 0 117px; padding-left: 10px; color: #969696; white-space: nowrap; }
.opts:not(.boxed) { height: 24px; margin-top: 12px; }
.opts .c3 { grid-column: 4; }
.opts.boxed { outline: 2px solid #ff2a30; outline-offset: -2px; }
.opts label { display: flex; align-items: center; gap: 5px; }
.ol { color: #111; }
.opts input { appearance: none; width: 16px; height: 16px; border: 1px solid #d0d0c4; border-radius: 50%; background: #fbfbf9; }
.opts input:checked { background: radial-gradient(circle, #cac8b8 0 3px, #fbfbf9 4px); }
.sample { width: 300px; height: 200px; margin: 11px 0 0 201px; background: #fff; border: 1px solid #c0c0c0; }
.sample table { width: 298px; border-collapse: collapse; table-layout: fixed; font: 12px/16px "DejaVu Sans", sans-serif; color: #888; }
.sample td { height: 37px; padding: 0; text-align: center; border-bottom: 1px solid #c0c0c0; }
.sample td + td { border-left: 1px solid #c0c0c0; }
.dfoot { display: flex; justify-content: flex-end; gap: 12px; margin: 27px -2px 0 0; }
.arrow { position: absolute; left: 335px; top: 173px; z-index: 4; pointer-events: none; }
</style>
